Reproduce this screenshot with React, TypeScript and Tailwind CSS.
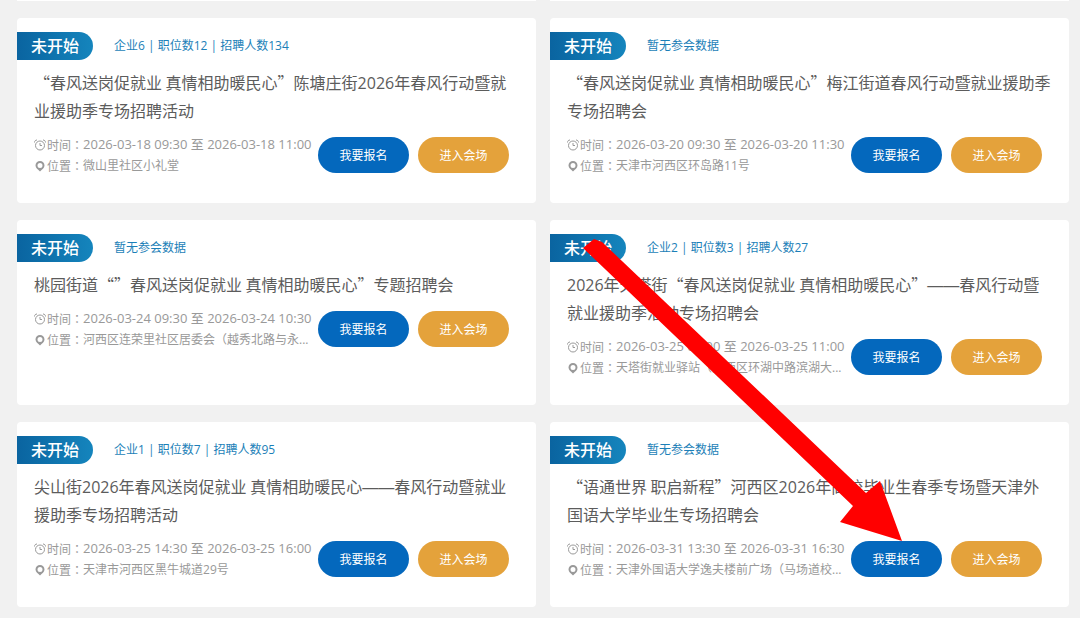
type Fair = {
  id: number;
  stats: string;
  title: string;
  time: string;
  place: string;
};

const fairs: Fair[] = [
  {
    id: 1,
    stats: "企业6 | 职位数12 | 招聘人数134",
    title: "“春风送岗促就业 真情相助暖民心”陈塘庄街2026年春风行动暨就业援助季专场招聘活动",
    time: "2026-03-18 09:30 至 2026-03-18 11:00",
    place: "微山里社区小礼堂",
  },
  {
    id: 2,
    stats: "暂无参会数据",
    title: "“春风送岗促就业 真情相助暖民心”梅江街道春风行动暨就业援助季专场招聘会",
    time: "2026-03-20 09:30 至 2026-03-20 11:30",
    place: "天津市河西区环岛路11号",
  },
  {
    id: 3,
    stats: "暂无参会数据",
    title: "桃园街道“”春风送岗促就业 真情相助暖民心”专题招聘会",
    time: "2026-03-24 09:30 至 2026-03-24 10:30",
    place: "河西区连荣里社区居委会（越秀北路与永...",
  },
  {
    id: 4,
    stats: "企业2 | 职位数3 | 招聘人数27",
    title: "2026年天塔街“春风送岗促就业 真情相助暖民心”——春风行动暨就业援助季活动专场招聘会",
    time: "2026-03-25 09:00 至 2026-03-25 11:00",
    place: "天塔街就业驿站（河西区环湖中路滨湖大...",
  },
  {
    id: 5,
    stats: "企业1 | 职位数7 | 招聘人数95",
    title: "尖山街2026年春风送岗促就业 真情相助暖民心——春风行动暨就业援助季专场招聘活动",
    time: "2026-03-25 14:30 至 2026-03-25 16:00",
    place: "天津市河西区黑牛城道29号",
  },
  {
    id: 6,
    stats: "暂无参会数据",
    title: "“语通世界 职启新程”河西区2026年高校毕业生春季专场暨天津外国语大学毕业生专场招聘会",
    time: "2026-03-31 13:30 至 2026-03-31 16:30",
    place: "天津外国语大学逸夫楼前广场（马场道校...",
  },
];

function ClockIcon() {
  return (
    <svg viewBox="0 0 24 24" className="h-3 w-3 shrink-0" fill="none" stroke="currentColor" strokeWidth="2" aria-hidden="true">
      <circle cx="12" cy="13" r="9" />
      <path d="M12 8v5h4M1 7c0-3 2-5 5-5M23 7c0-3-2-5-5-5" />
    </svg>
  );
}

function PinIcon() {
  return (
    <svg viewBox="0 0 24 24" className="h-3 w-3 shrink-0" aria-hidden="true">
      <path
        fill="currentColor"
        fillRule="evenodd"
        d="M12 2a9 9 0 0 0-9 9c0 5 5 8 9 12 4-4 9-7 9-12a9 9 0 0 0-9-9Zm0 4a5 5 0 1 1 0 10 5 5 0 0 1 0-10Z"
      />
    </svg>
  );
}

function Title({ text }: { text: string }) {
  return (
    <h2 className="text-base leading-7 text-[#5c5c5c]">
      <a href="#">
        {text.split(/(\d+|——)/).map((part, i) => {
          if (/^\d/.test(part)) {
            return (
              <span key={i} className="font-['Open_Sans',sans-serif] leading-none">
                {part}
              </span>
            );
          }
          if (part === "——") {
            return (
              <span key={i} className="font-['Liberation_Sans',sans-serif] leading-none">
                {part}
              </span>
            );
          }
          return part;
        })}
      </a>
    </h2>
  );
}

function Label({ children }: { children: string }) {
  return (
    <span className="ml-px">
      {children}
      <span className="font-['Noto_Sans_CJK_JP',sans-serif]">：</span>
    </span>
  );
}

function FairCard({ fair }: { fair: Fair }) {
  return (
    <li className="min-h-[185px] rounded-sm bg-white pt-[14px] pb-6">
      <div className="flex items-center gap-[21px]">
        <span className="flex h-7 w-[76px] items-center justify-center rounded-r-full bg-linear-to-r from-[#0a64a0] to-[#1585bd] pb-0.5 text-base font-medium text-white">
          未开始
        </span>
        <span className="font-['Open_Sans','Noto_Sans_CJK_SC',sans-serif] text-xs text-[#1c7fb8]">{fair.stats}</span>
      </div>
      <div className="mt-2 px-[17px]">
        <Title text={fair.title} />
      </div>
      <div className="mt-[10px] flex items-center pr-[27px] pl-[17px]">
        <div className="min-w-0 flex-1 text-xs leading-[21px] whitespace-nowrap text-[#999]">
          <p className="flex items-center">
            <ClockIcon />
            <Label>时间</Label>
            <time className="font-['Open_Sans','Noto_Sans_CJK_SC',sans-serif] text-[13px]">{fair.time}</time>
          </p>
          <p className="flex items-center">
            <PinIcon />
            <Label>位置</Label>
            <span className="font-['Open_Sans','Noto_Sans_CJK_SC',sans-serif]">{fair.place}</span>
          </p>
        </div>
        <div className="flex shrink-0 gap-[9px] text-xs text-white">
          <button type="button" className="h-9 w-[91px] rounded-full bg-[#0468bd]">
            我要报名
          </button>
          <button type="button" className="h-9 w-[91px] rounded-full bg-[#e4a23b]">
            进入会场
          </button>
        </div>
      </div>
    </li>
  );
}

export default function App() {
  return (
    <main className="relative min-h-screen bg-[#f1f1f1] pr-[11px] pl-[17px] font-['Noto_Sans_CJK_SC',sans-serif]">
      <ul className="grid grid-cols-2 gap-x-[14px] gap-y-[17px]">
        <li className="h-px bg-white" aria-hidden="true" />
        <li className="h-px bg-white" aria-hidden="true" />
        {fairs.map((fair) => (
          <FairCard key={fair.id} fair={fair} />
        ))}
      </ul>
      <svg
        className="pointer-events-none absolute top-[238px] left-[583px] h-[304px] w-[320px]"
        viewBox="583 238 320 304"
        aria-hidden="true"
      >
        <path fill="#f00" d="M583 248 594 239 602 242 866 493 880 481 902 541 840 522 853 506Z" />
      </svg>
    </main>
  );
}
